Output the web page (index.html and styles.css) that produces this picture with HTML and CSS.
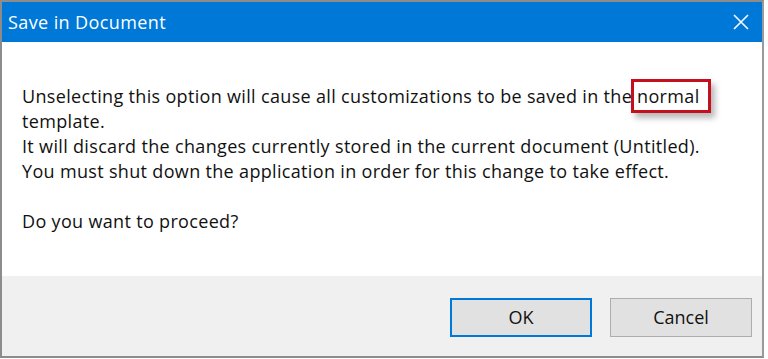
FILE: index.html
```html
<!DOCTYPE html>
<html lang="en">
<head>
<meta charset="UTF-8">
<meta name="viewport" content="width=device-width, initial-scale=1.0">
<title>Save in Document</title>
<link rel="stylesheet" href="styles.css">
</head>
<body>
<div class="window">
  <div class="titlebar">
    <span class="title">Save in Document</span>
    <span class="close">
      <svg width="16" height="16" viewBox="0 0 16 16">
        <path d="M1 1 L15 15 M15 1 L1 15" stroke="#fff" stroke-width="1.6" fill="none"/>
      </svg>
    </span>
  </div>

  <div class="content">
    <p>Unselecting this option will cause all customizations to be saved in the <span class="mark">normal</span><br>
    template.<br>
    It will discard the changes currently stored in the current document (Untitled).<br>
    You must shut down the application in order for this change to take effect.</p>
    <p>Do you want to proceed?</p>
  </div>

  <div class="footer">
    <button class="btn default">OK</button>
    <button class="btn">Cancel</button>
  </div>
</div>
</body>
</html>
```

FILE: styles.css
```css
body {
  margin: 0;
  padding: 0;
  background: #fff;
  font-family: 'Open Sans', 'Noto Sans', sans-serif;
  color: #111;
}

.window {
  width: 760px;
  height: 354px;
  border: 2px solid #8c8c8c;
  border-right-color: #9a9a9a;
  display: flex;
  flex-direction: column;
  background: #fff;
}

.titlebar {
  height: 40px;
  background: #0078d7;
  display: flex;
  align-items: center;
  justify-content: space-between;
  padding: 0 13px 0 6px;
  color: #fff;
}

.title {
  font-size: 18px;
  letter-spacing: 0.4px;
}

.close {
  display: flex;
  margin-top: -1px;
}

.content {
  flex: 1;
  padding: 42px 20px 0;
  font-size: 18px;
  line-height: 25px;
  letter-spacing: 0.33px;
}

.content p {
  margin: 0 0 25px;
}

.mark {
  position: relative;
}

.mark::after {
  content: "";
  position: absolute;
  left: -6px;
  right: -11px;
  top: -5px;
  bottom: -5px;
  border: 3px solid #c3101c;
  box-shadow: 4px 5px 6px rgba(0, 0, 0, 0.28);
}

.footer {
  height: 80px;
  background: #f0f0f0;
  display: flex;
  justify-content: flex-end;
  align-items: flex-start;
  gap: 18px;
  padding: 22px 10px 0 0;
  box-sizing: border-box;
}

.btn {
  width: 142px;
  height: 39px;
  background: #e1e1e1;
  border: 1px solid #adadad;
  font-family: 'Open Sans', 'Noto Sans', sans-serif;
  font-size: 18px;
  color: #111;
  padding: 0 0 2px;
}

.btn.default {
  border: 2px solid #0078d7;
}
```
